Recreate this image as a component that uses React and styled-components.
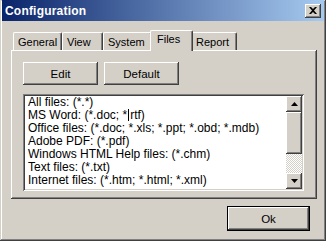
import styled, { createGlobalStyle } from "styled-components"

const GlobalStyle = createGlobalStyle`
  body {
    margin: 0;
    background: #d4d0c8;
    font-family: "Liberation Sans", Arial, sans-serif;
    font-size: 11px;
    color: #000;
  }
`

const raised = `
  box-shadow: inset -1px -1px #404040, inset 1px 1px #fff,
    inset -2px -2px #808080, inset 2px 2px #d4d0c8;
`

const tabs = [
  { label: "General", width: 49 },
  { label: "View", width: 41 },
  { label: "System", width: 49 },
  { label: "Files", width: 39 },
  { label: "Report", width: 46 },
]

const files = [
  "All files: (*.*)",
  null,
  "Office files: (*.doc; *.xls; *.ppt; *.obd; *.mdb)",
  "Adobe PDF: (*.pdf)",
  "Windows HTML Help files: (*.chm)",
  "Text files: (*.txt)",
  "Internet files: (*.htm; *.html; *.xml)",
]

export default function App() {
  return (
    <>
      <GlobalStyle />
      <Window>
        <TitleBar>
          <Title>Configuration</Title>
          <CloseButton>
            <svg width="8" height="7" viewBox="0 0 8 7">
              <path d="M0 0h2l2 2 2-2h2L5 3.5 8 7H6L4 5 2 7H0l3-3.5z" fill="#000" />
            </svg>
          </CloseButton>
        </TitleBar>
        <Body>
          <TabRow>
            {tabs.map((t) => (
              <Tab key={t.label} $w={t.width} $active={t.label === "Files"}>
                {t.label}
              </Tab>
            ))}
          </TabRow>
          <Panel>
            <ButtonRow>
              <Button>Edit</Button>
              <Button>Default</Button>
            </ButtonRow>
            <ListBox>
              <List>
                {files.map((f, i) =>
                  f ? (
                    <Item key={i}>{f}</Item>
                  ) : (
                    <Item key={i}>
                      MS Word: (*.doc; *<Caret />rtf)
                    </Item>
                  )
                )}
              </List>
              <ScrollBar>
                <ArrowButton>
                  <svg width="7" height="4" viewBox="0 0 7 4">
                    <path d="M3.5 0L7 4H0z" fill="#000" />
                  </svg>
                </ArrowButton>
                <Thumb />
                <Track />
                <ArrowButton>
                  <svg width="7" height="4" viewBox="0 0 7 4">
                    <path d="M0 0h7L3.5 4z" fill="#000" />
                  </svg>
                </ArrowButton>
              </ScrollBar>
            </ListBox>
          </Panel>
          <Footer>
            <OkButton>Ok</OkButton>
          </Footer>
        </Body>
      </Window>
    </>
  )
}

const Window = styled.div`
  width: 326px;
  height: 241px;
  box-sizing: border-box;
  padding: 0 2px 2px 2px;
  background: #d4d0c8;
  box-shadow: inset -1px -1px #404040, inset 1px 1px #d4d0c8,
    inset -2px -2px #808080, inset 2px 2px #fff;
`

const TitleBar = styled.div`
  height: 21px;
  display: flex;
  align-items: center;
  justify-content: space-between;
  padding: 0 3px 0 3px;
  background: linear-gradient(to right, #0a246a, #a6caf0);
`

const Title = styled.span`
  color: #fff;
  font-weight: bold;
  font-size: 12px;
  letter-spacing: 0.2px;
`

const CloseButton = styled.div`
  width: 16px;
  height: 14px;
  display: flex;
  align-items: center;
  justify-content: center;
  background: #d4d0c8;
  ${raised}
`

const Body = styled.div`
  padding: 9px 7px 0 9px;
`

const TabRow = styled.div`
  display: flex;
  align-items: flex-end;
  height: 20px;
  padding-left: 2px;
`

const Tab = styled.div`
  box-sizing: border-box;
  width: ${(p) => (p.$active ? p.$w + 4 : p.$w)}px;
  height: ${(p) => (p.$active ? 21 : 18)}px;
  margin: ${(p) => (p.$active ? "0 -2px -1px -2px" : "0")};
  padding: ${(p) => (p.$active ? "2px 0 0 6px" : "3px 0 0 4px")};
  line-height: 13px;
  font-size: 11px;
  white-space: nowrap;
  overflow: hidden;
  background: #d4d0c8;
  border-top: 1px solid #fff;
  border-left: 1px solid #fff;
  border-right: 1px solid #404040;
  border-radius: 2px 2px 0 0;
  box-shadow: inset -1px 0 #808080;
  position: relative;
  z-index: ${(p) => (p.$active ? 1 : 0)};
`

const Panel = styled.div`
  height: 149px;
  box-sizing: border-box;
  padding: 12px 13px 8px 12px;
  box-shadow: inset -1px -1px #404040, inset 1px 1px #fff,
    inset -2px -2px #808080;
`

const ButtonRow = styled.div`
  display: flex;
  gap: 6px;
`

const Button = styled.div`
  width: 75px;
  height: 23px;
  display: flex;
  align-items: center;
  justify-content: center;
  font-size: 11.5px;
  background: #d4d0c8;
  ${raised}
`

const ListBox = styled.div`
  margin-top: 9px;
  height: 97px;
  box-sizing: border-box;
  display: flex;
  padding: 2px;
  background: #fff;
  box-shadow: inset 1px 1px #808080, inset -1px -1px #fff,
    inset 2px 2px #404040, inset -2px -2px #d4d0c8;
`

const List = styled.div`
  flex: 1;
  padding-left: 3px;
  overflow: hidden;
`

const Item = styled.div`
  height: 13px;
  line-height: 13px;
  font-size: 12px;
  white-space: nowrap;
`

const Caret = styled.span`
  display: inline-block;
  width: 1px;
  height: 12px;
  margin: 0 1px;
  background: #000;
  vertical-align: -2px;
`

const ScrollBar = styled.div`
  width: 16px;
  display: flex;
  flex-direction: column;
`

const ArrowButton = styled.div`
  height: 16px;
  display: flex;
  align-items: center;
  justify-content: center;
  background: #d4d0c8;
  ${raised}
`

const Thumb = styled.div`
  height: 42px;
  background: #d4d0c8;
  ${raised}
`

const Track = styled.div`
  flex: 1;
  background-image: repeating-conic-gradient(#fff 0 25%, #d4d0c8 0 50%);
  background-size: 2px 2px;
`

const Footer = styled.div`
  display: flex;
  justify-content: flex-end;
  padding: 7px 7px 0 0;
`

const OkButton = styled(Button)`
  width: 83px;
  height: 25px;
  box-shadow: inset 0 0 0 1px #000, inset -2px -2px #404040,
    inset 2px 2px #fff, inset -3px -3px #808080;
`
